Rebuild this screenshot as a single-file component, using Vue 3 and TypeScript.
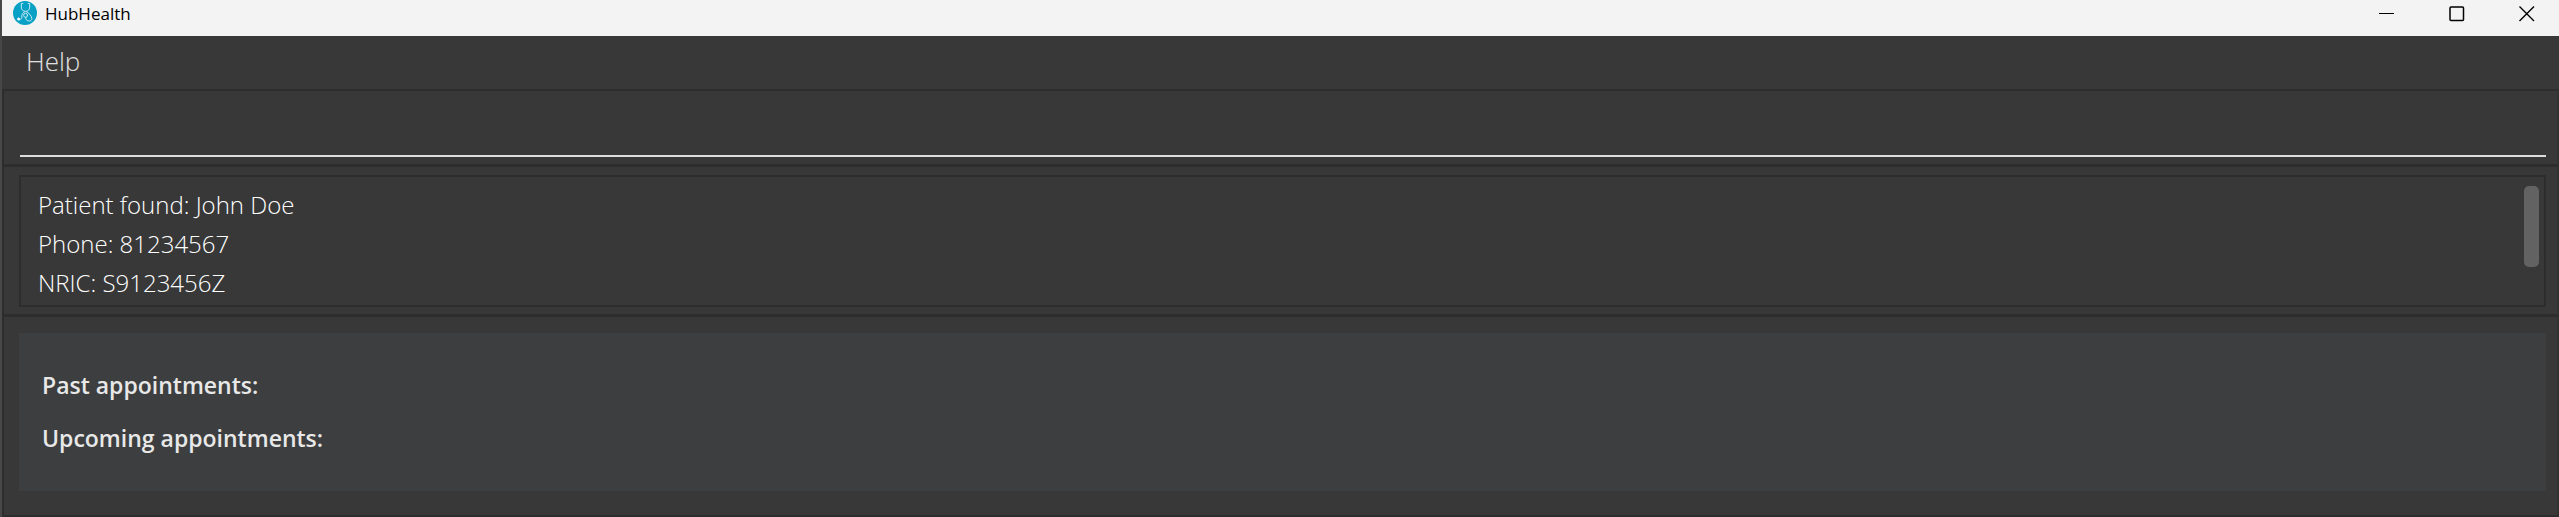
<script setup lang="ts">
import { ref } from 'vue'

interface AppointmentGroup {
  id: string
  heading: string
}

const command = ref('')
const result = ref(['Patient found: John Doe', 'Phone: 81234567', 'NRIC: S9123456Z'].join('\n'))
const groups: AppointmentGroup[] = [
  { id: 'past', heading: 'Past appointments:' },
  { id: 'upcoming', heading: 'Upcoming appointments:' },
]
</script>

<template>
  <div class="window">
    <header class="titlebar">
      <svg class="logo" viewBox="0 0 24 24" aria-hidden="true">
        <circle cx="12" cy="12" r="12" fill="#08a0c4" />
        <g fill="none" stroke="#c4e9f2" stroke-width="1" stroke-linecap="round" stroke-linejoin="round">
          <path d="M9.800 2.500H8.300V6c0 2.600 1.700 4.400 4.200 4.400S16.700 8.600 16.700 6V2.500h-1.500" />
          <path d="M11.800 10.500C10 11.500 8.300 13.500 8.800 16.500c.2 1.800-1.400 2.300-3 1.500" />
          <path d="M13.200 10.500c2.500 1.300 5.300 4 5.600 7 .1 1.600-1 2.500-2.500 2.500-2.500 0-3.600-1.300-3.700-3.600" />
          <circle cx="12.600" cy="14.300" r="2" />
        </g>
        <circle cx="5.600" cy="18" r="1.500" fill="#f2fbfd" />
      </svg>
      <h1 class="title">HubHealth</h1>
      <div class="controls">
        <button type="button" class="control" aria-label="Minimize">
          <svg viewBox="0 0 16 16"><path d="M0 7.500h15" /></svg>
        </button>
        <button type="button" class="control" aria-label="Maximize">
          <svg viewBox="0 0 16 16"><rect x="1" y="1" width="13.500" height="13.500" rx="1" stroke-width="1.500" /></svg>
        </button>
        <button type="button" class="control" aria-label="Close">
          <svg viewBox="0 0 16 16"><path d="M.5.500l14.500 14.500M15 .500L.5 15" stroke-width="1.400" /></svg>
        </button>
      </div>
    </header>

    <div class="body">
      <nav class="menubar">
        <button type="button" class="menu">Help</button>
      </nav>
      <section class="pane command-pane">
        <input v-model="command" class="command" type="text" aria-label="Command" />
      </section>
      <section class="pane result-pane">
        <div class="result-box">
          <textarea v-model="result" class="result" rows="3" readonly aria-label="Result" />
          <div class="thumb" />
        </div>
      </section>
      <main class="pane list-pane">
        <div class="card">
          <h2 v-for="group in groups" :key="group.id" class="heading">{{ group.heading }}</h2>
        </div>
      </main>
    </div>
  </div>
</template>

<style>
body {
  margin: 0;
  background: #383838;
}
</style>

<style scoped>
.window {
  display: flex;
  flex-direction: column;
  min-height: 100vh;
  box-sizing: border-box;
  border-left: 2px solid #484848;
  font-family: "Open Sans", "Noto Sans", sans-serif;
  background: #383838;
}
.titlebar {
  display: flex;
  align-items: flex-start;
  height: 36px;
  padding-left: 11px;
  background: #f3f3f3;
  color: #000;
}
.logo {
  width: 24px;
  height: 24px;
  margin-top: 1px;
}
.title {
  margin: 0 0 0 8px;
  font-size: 17px;
  line-height: 28px;
  font-weight: 400;
}
.controls {
  display: flex;
  gap: 6px;
  margin-left: auto;
}
.control {
  display: flex;
  align-items: center;
  justify-content: center;
  width: 64px;
  height: 28px;
  padding: 0;
  border: 0;
  background: none;
}
.control svg {
  width: 16px;
  height: 16px;
  fill: none;
  stroke: #000;
  stroke-width: 1;
}
.body {
  flex: 1;
  display: flex;
  flex-direction: column;
}
.menubar {
  height: 53px;
  padding: 0 24px;
}
.menu {
  height: 50px;
  padding: 0;
  border: 0;
  background: none;
  color: #e0e0e0;
  font-family: inherit;
  font-size: 26px;
  font-weight: 300;
}
.pane {
  border: 2px solid #2d2d2d;
  border-right-color: #323232;
}
.pane + .pane {
  border-top-width: 1px;
}
.command-pane {
  padding: 8px 11px 7px 16px;
}
.command {
  display: block;
  box-sizing: border-box;
  width: 100%;
  height: 58px;
  padding: 0 8px;
  border: 0;
  border-bottom: 2px solid #dcdcdc;
  outline: 0;
  background: none;
  color: #fff;
  font-family: inherit;
  font-size: 26px;
  font-weight: 300;
}
.result-pane {
  padding: 8px 11px 7px 15px;
}
.result-box {
  display: flex;
  align-items: flex-start;
  padding: 8px 5px 3px 17px;
  border: 2px solid #2d2d2d;
}
.result {
  flex: 1;
  height: 117px;
  padding: 0;
  border: 0;
  outline: 0;
  resize: none;
  overflow: hidden;
  background: none;
  color: #fff;
  font-family: inherit;
  font-size: 24px;
  line-height: 39px;
  font-weight: 300;
}
.thumb {
  width: 15px;
  height: 81px;
  margin-top: 1px;
  border-radius: 5px;
  background: #626262;
}
.list-pane {
  flex: 1;
  padding: 16px 11px 24px 15px;
}
.card {
  display: flex;
  flex-direction: column;
  gap: 17px;
  padding: 34px 23px 35px;
  background: #3c3e3f;
}
.heading {
  margin: 0;
  color: #e8e8e8;
  font-size: 23px;
  line-height: 36px;
  font-weight: 600;
}
</style>
